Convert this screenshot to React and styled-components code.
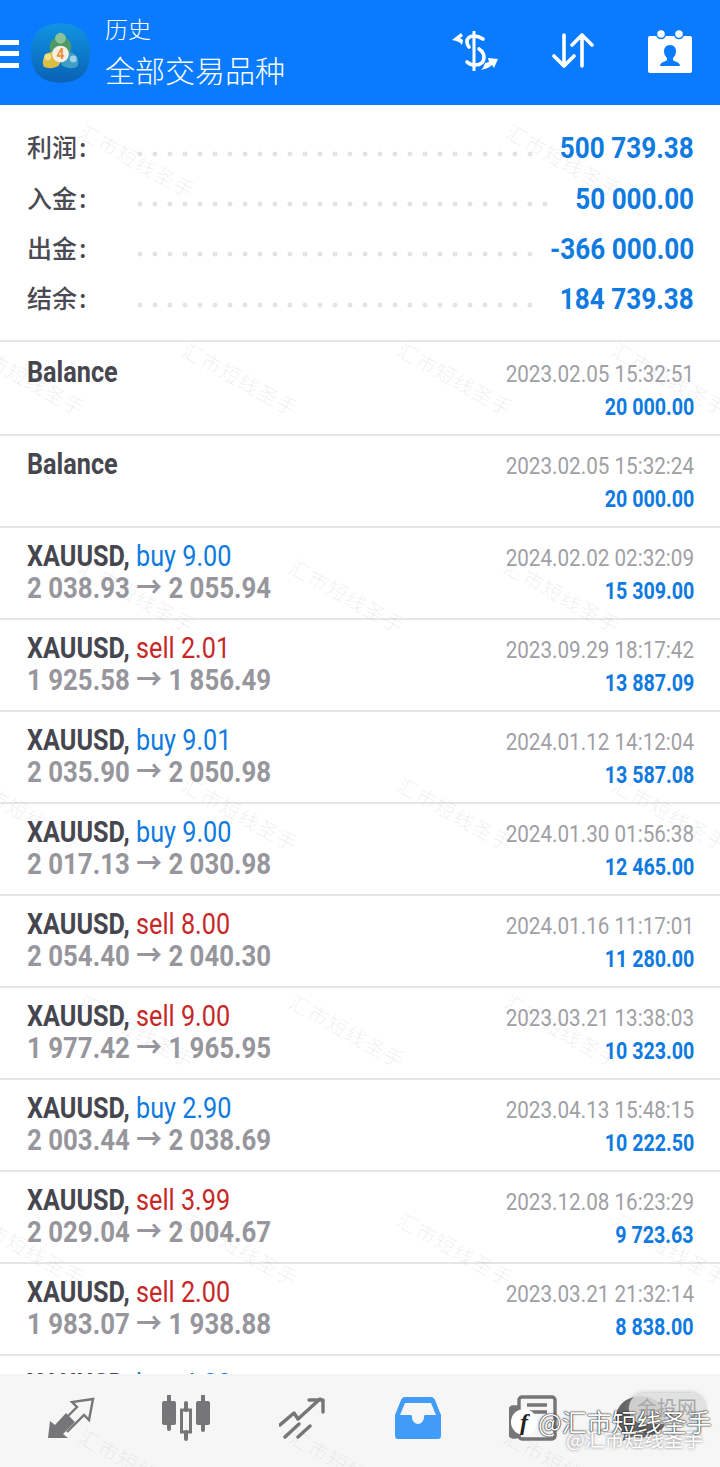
import React from "react";
import styled, { createGlobalStyle } from "styled-components";

const CJK = '"Noto Sans CJK SC", "Noto Sans", sans-serif';

const GlobalStyle = createGlobalStyle`
  html, body { margin: 0; padding: 0; background: #fff; }
  body { font-family: Roboto, ${CJK}; }
`;

const summary = [
  { label: "利润", value: "500 739.38", dots: 27 },
  { label: "入金", value: "50 000.00", dots: 28 },
  { label: "出金", value: "-366 000.00", dots: 27 },
  { label: "结余", value: "184 739.38", dots: 27 },
];

const deals = [
  { symbol: "Balance", time: "2023.02.05 15:32:51", profit: "20 000.00", tall: true },
  { symbol: "Balance", time: "2023.02.05 15:32:24", profit: "20 000.00" },
  { symbol: "XAUUSD,", side: "buy", lots: "9.00", from: "2 038.93", to: "2 055.94", time: "2024.02.02 02:32:09", profit: "15 309.00" },
  { symbol: "XAUUSD,", side: "sell", lots: "2.01", from: "1 925.58", to: "1 856.49", time: "2023.09.29 18:17:42", profit: "13 887.09" },
  { symbol: "XAUUSD,", side: "buy", lots: "9.01", from: "2 035.90", to: "2 050.98", time: "2024.01.12 14:12:04", profit: "13 587.08" },
  { symbol: "XAUUSD,", side: "buy", lots: "9.00", from: "2 017.13", to: "2 030.98", time: "2024.01.30 01:56:38", profit: "12 465.00" },
  { symbol: "XAUUSD,", side: "sell", lots: "8.00", from: "2 054.40", to: "2 040.30", time: "2024.01.16 11:17:01", profit: "11 280.00" },
  { symbol: "XAUUSD,", side: "sell", lots: "9.00", from: "1 977.42", to: "1 965.95", time: "2023.03.21 13:38:03", profit: "10 323.00" },
  { symbol: "XAUUSD,", side: "buy", lots: "2.90", from: "2 003.44", to: "2 038.69", time: "2023.04.13 15:48:15", profit: "10 222.50" },
  { symbol: "XAUUSD,", side: "sell", lots: "3.99", from: "2 029.04", to: "2 004.67", time: "2023.12.08 16:23:29", profit: "9 723.63" },
  { symbol: "XAUUSD,", side: "sell", lots: "2.00", from: "1 983.07", to: "1 938.88", time: "2023.03.21 21:32:14", profit: "8 838.00" },
  { symbol: "XAUUSD,", side: "buy", lots: "4.00" },
];

// watermark tiles: [left, top] of each stamp
const stamps = [
  [81, 118], [508, 118],
  [-29, 336], [184, 336], [399, 336], [614, 336],
  [81, 553], [291, 553], [506, 553],
  [-29, 771], [184, 771], [399, 771], [614, 771],
  [81, 988], [291, 988], [506, 988],
  [-29, 1206], [184, 1206], [399, 1206], [614, 1206],
  [81, 1423], [291, 1423], [506, 1423],
];

const Page = styled.div`
  position: relative;
  width: 720px;
  height: 1467px;
  overflow: hidden;
  display: flex;
  flex-direction: column;
  background: #fff;
`;

const Header = styled.header`
  flex: none;
  height: 105px;
  background: #0a7bff;
  display: flex;
  align-items: center;
  color: #fff;
`;

const Burger = styled.div`
  width: 19px;
  height: 28px;
  margin-top: 2px;
  display: flex;
  flex-direction: column;
  justify-content: space-between;
  span { display: block; height: 5px; background: #fff; }
`;

const Logo = styled.svg`
  width: 59px;
  height: 60px;
  margin-left: 12px;
  margin-top: 1px;
`;

const Titles = styled.div`
  margin-left: 15px;
  flex: 1;
  font-family: ${CJK};
  font-weight: 300;
`;

const Sub = styled.div`
  font-size: 23px;
  line-height: 28px;
  margin-top: -2px;
`;

const Title = styled.div`
  font-size: 30px;
  line-height: 42px;
  margin-top: 6px;
`;

const HeaderIcons = styled.div`
  display: flex;
  align-items: center;
  gap: 54px;
  margin-right: 28px;
  margin-bottom: 4px;
`;

const Summary = styled.section`
  flex: none;
  height: 235px;
  box-sizing: border-box;
  padding-top: 18px;
`;

const SummaryRow = styled.div`
  height: 50.4px;
  display: flex;
  align-items: center;
  padding: 0 26px 0 27px;
`;

const SummaryLabel = styled.span`
  flex: none;
  width: 110px;
  font-family: ${CJK};
  font-size: 25px;
  line-height: 30px;
  margin-top: -4px;
  font-weight: 500;
  color: #4a4a52;
  &::after { content: ":"; margin-left: 2px; }
`;

const Dots = styled.span`
  flex: none;
  width: ${(p) => p.$count * 15}px;
  height: 6px;
  margin-top: 11px;
  margin-right: -30px;
  background-image: radial-gradient(circle at 3px 3px, #e4e4e6 2.2px, transparent 2.8px);
  background-size: 15px 6px;
  background-repeat: repeat-x;
`;

const Condensed = styled.span`
  display: inline-block;
  white-space: pre;
  transform: scaleX(${(p) => p.$x || 0.86});
  transform-origin: ${(p) => (p.$end ? "right" : "left")} center;
`;

const SummaryValue = styled(Condensed)`
  margin-left: auto;
  font-size: 29px;
  font-weight: 700;
  color: #0f7ae0;
`;

const List = styled.div`
  flex: 1;
  overflow: hidden;
`;

const Row = styled.div`
  height: ${(p) => (p.$tall ? 94 : 92)}px;
  box-sizing: border-box;
  border-top: 2px solid #e6e6e8;
  padding: 0 26px 0 27px;
  display: flex;
  justify-content: space-between;
`;

const Left = styled.div`
  padding-top: ${(p) => (p.$tall ? 13 : 11)}px;
`;

const Right = styled.div`
  padding-top: ${(p) => (p.$tall ? 17 : 15)}px;
  display: flex;
  flex-direction: column;
  align-items: flex-end;
`;

const TopLine = styled(Condensed)`
  display: block;
  font-size: 29px;
  line-height: 34px;
  font-weight: 400;
  color: ${(p) => (p.$side === "sell" ? "#c62828" : "#0f7ae0")};
`;

const Symbol = styled.b`
  font-weight: 700;
  color: #46464e;
`;

const Prices = styled(Condensed)`
  display: block;
  font-size: 29px;
  line-height: 30px;
  font-weight: 700;
  color: #96969c;
`;

const Time = styled(Condensed)`
  font-size: 24px;
  line-height: 30px;
  color: #a0a0a6;
`;

const Profit = styled(Condensed)`
  font-size: 24px;
  line-height: 30px;
  margin-top: 3px;
  font-weight: 700;
  color: #0f7ae0;
`;

const Nav = styled.nav`
  position: relative;
  flex: none;
  height: 93px;
  background: #f6f6f6;
  display: grid;
  grid-template-columns: repeat(6, 1fr);
  padding: 0 13px;
  align-items: center;
`;

const NavCell = styled.div`
  display: flex;
  justify-content: center;
  margin-top: -6px;
  margin-right: ${(p) => p.$shift || 0}px;
`;

const Stamp = styled.span`
  position: absolute;
  font-family: ${CJK};
  font-size: 20px;
  font-weight: 300;
  line-height: 24px;
  letter-spacing: 1.5px;
  white-space: nowrap;
  color: rgba(120, 120, 130, 0.13);
  transform: rotate(29deg);
  transform-origin: left center;
  pointer-events: none;
`;

const Badge = styled.div`
  position: absolute;
  left: 629px;
  top: 1393px;
  width: 76px;
  height: 31px;
  border-radius: 15px;
  background: rgba(222, 222, 222, 0.88);
  box-shadow: 0 0 4px rgba(150, 150, 150, 0.7);
  font-family: ${CJK};
  font-size: 20px;
  line-height: 29px;
  text-align: center;
  color: #a8a8a8;
`;

const Credit = styled.div`
  position: absolute;
  font-family: ${CJK};
  white-space: nowrap;
  color: #fff;
`;

const CreditMain = styled(Credit)`
  left: 538px;
  top: 1406px;
  font-size: 25px;
  line-height: 30px;
  text-shadow: 0 0 2px #000, 0 0 1px #000;
`;

const CreditSub = styled(Credit)`
  left: 566px;
  top: 1427px;
  font-size: 19.8px;
  line-height: 24px;
  text-shadow: 0 0 3px rgba(90, 90, 90, 0.8);
`;

const Zhihu = styled.div`
  position: absolute;
  left: 511px;
  top: 1409px;
  width: 26px;
  height: 26px;
  border-radius: 50%;
  background: #fff;
  color: #222;
  font-family: "Liberation Serif", serif;
  font-style: italic;
  font-weight: 700;
  font-size: 24px;
  line-height: 26px;
  text-align: center;
`;

function MtLogo() {
  return (
    <Logo viewBox="0 0 60 60">
      <defs>
        <linearGradient id="tile" x1="0" y1="0" x2="0" y2="1">
          <stop offset="0" stopColor="#0f94e2" />
          <stop offset="1" stopColor="#0a62b4" />
        </linearGradient>
      </defs>
      <path d="M30 0C50 0 60 10 60 30S50 60 30 60 0 50 0 30 10 0 30 0Z" fill="url(#tile)" />
      <circle cx="30" cy="24" r="11" fill="#4c9a68" />
      <circle cx="30" cy="15" r="5.5" fill="#8cc29a" />
      <path d="M13 44c-3-6 1-15 8-15 4 0 8 4 10 9l-3 5c-5 3-11 3-15 1Z" fill="#d9bd44" />
      <circle cx="17" cy="34" r="3.5" fill="#f1e08a" />
      <path d="M47 44c3-6-1-15-8-15-4 0-8 4-10 9l3 5c5 3 11 3 15 1Z" fill="#3f9ec8" />
      <circle cx="43" cy="36" r="3.5" fill="#9fd2e6" />
      <circle cx="30" cy="31" r="8.5" fill="#f6efe4" />
      <text x="30" y="36" textAnchor="middle" fontSize="14" fontWeight="700" fontFamily="Roboto" fill="#e8923c">4</text>
    </Logo>
  );
}

function DollarIcon() {
  return (
    <svg width="46" height="40" viewBox="0 0 46 40" fill="none" stroke="#fff" strokeLinecap="round">
      <path d="M22 1v38" strokeWidth="3" />
      <path d="M31 8c-3-2-6-3-9-3-4 0-7 2-7 6 0 2 1 4 2 5" strokeWidth="3.6" />
      <path d="M27 18c3 2 5 4 5 8 0 5-3 8-9 8-3 0-6-1-8-3" strokeWidth="3.6" />
      <path d="M0 9l9-7 2 3-3 2 3 2-1 5c-2-3-5-4-10-5Z" fill="#fff" stroke="none" />
      <path d="M46 28l-10-1 1 4-4 1c-1 3-2 5-4 7 5-1 9-3 11-5l2 3Z" fill="#fff" stroke="none" />
    </svg>
  );
}

function SwapIcon() {
  return (
    <svg width="42" height="36" viewBox="0 0 42 36" fill="none" stroke="#fff" strokeWidth="3.6" strokeLinecap="round" strokeLinejoin="round">
      <path d="M12 2v31M2 23l10 10 10-10" />
      <path d="M30 33V2M20 12L30 2l10 10" />
    </svg>
  );
}

function ContactIcon() {
  return (
    <svg width="44" height="44" viewBox="0 0 44 44">
      <path fillRule="evenodd" fill="#fff" d="M2 7h40a2 2 0 0 1 2 2v33a2 2 0 0 1-2 2H2a2 2 0 0 1-2-2V9a2 2 0 0 1 2-2ZM22 16c-4 0-6 3-6 6 0 3 1 5 3 7v2c-2 2-7 2-7 6h20c0-4-5-4-7-6v-2c2-2 3-4 3-7 0-3-2-6-6-6Z" />
      <circle cx="13" cy="5" r="4.5" fill="#fff" stroke="#0a7bff" strokeWidth="1.5" />
      <circle cx="31" cy="5" r="4.5" fill="#fff" stroke="#0a7bff" strokeWidth="1.5" />
    </svg>
  );
}

function TradeIcon() {
  return (
    <svg width="48" height="42" viewBox="0 0 48 42" fill="none">
      <path d="M1 41l2-17 5 4 11-12 9 9-12 12 5 4z" fill="#767678" />
      <path d="M20 35l17-17 5 5 4-21-21 3 5 5-17 17" stroke="#767678" strokeWidth="2.4" />
    </svg>
  );
}

function CandlesIcon() {
  return (
    <svg width="48" height="46" viewBox="0 0 48 46" fill="#767678" stroke="#767678" strokeLinecap="round">
      <path d="M7 1v33M41 1v34" strokeWidth="4" />
      <rect x="0" y="6" width="14" height="24" rx="2" stroke="none" />
      <rect x="34" y="6" width="14" height="24" rx="2" stroke="none" />
      <path d="M24 8v7M24 37v7" strokeWidth="4" />
      <rect x="19.5" y="15" width="9" height="22" fill="none" strokeWidth="3" />
    </svg>
  );
}

function TrendIcon() {
  return (
    <svg width="46" height="42" viewBox="0 0 46 42" fill="none" stroke="#767678" strokeWidth="3.4" strokeLinecap="round" strokeLinejoin="round">
      <path d="M1 28l14-12 4 6 22-20" />
      <path d="M30 3h14v12" />
      <path d="M6 40l14-13M19 40l12-11" />
    </svg>
  );
}

function TrayIcon() {
  return (
    <svg width="46" height="42" viewBox="0 0 46 42">
      <path fillRule="evenodd" fill="#419cf8" d="M10 0h26c2 0 3 1 4 3l6 15v21c0 2-1 3-3 3H3c-2 0-3-1-3-3V18L6 3c1-2 2-3 4-3ZM10 6L5 18h10c1 0 2 0 2 2 0 4 3 7 6 7s6-3 6-7c0-2 1-2 2-2h10L36 6Z" />
    </svg>
  );
}

function NewsIcon() {
  return (
    <svg width="48" height="46" viewBox="0 0 48 46" fill="none" stroke="#767678" strokeWidth="3.4">
      <rect x="10" y="2" width="36" height="42" rx="3" />
      <path d="M18 10h20M18 17h20" />
      <rect x="1" y="12" width="9" height="30" rx="3" fill="#767678" />
    </svg>
  );
}

function ChatIcon() {
  return (
    <svg width="56" height="48" viewBox="0 0 48 44">
      <path d="M24 2C10 2 1 11 1 22c0 7 4 12 8 15l-2 6 9-4c3 1 5 1 8 1 14 0 23-8 23-18S38 2 24 2Z" fill="#666668" />
    </svg>
  );
}

export default function App() {
  return (
    <Page>
      <GlobalStyle />
      <Header>
        <Burger><span /><span /><span /></Burger>
        <MtLogo />
        <Titles>
          <Sub>历史</Sub>
          <Title>全部交易品种</Title>
        </Titles>
        <HeaderIcons>
          <DollarIcon />
          <SwapIcon />
          <ContactIcon />
        </HeaderIcons>
      </Header>

      <Summary>
        {summary.map((s) => (
          <SummaryRow key={s.label}>
            <SummaryLabel>{s.label}</SummaryLabel>
            <Dots $count={s.dots} />
            <SummaryValue $end $x={0.9}>{s.value}</SummaryValue>
          </SummaryRow>
        ))}
      </Summary>

      <List>
        {deals.map((d, i) => (
          <Row key={i} $tall={d.tall}>
            <Left $tall={d.tall}>
              <TopLine $side={d.side} $x={0.87}>
                <Symbol>{d.symbol}</Symbol>
                {d.side ? ` ${d.side} ${d.lots}` : ""}
              </TopLine>
              {d.from && <Prices $x={0.89}>{`${d.from} → ${d.to}`}</Prices>}
            </Left>
            <Right $tall={d.tall}>
              {d.time && <Time $end>{d.time}</Time>}
              {d.profit && <Profit $end $x={0.82}>{d.profit}</Profit>}
            </Right>
          </Row>
        ))}
      </List>

      <Nav>
        <NavCell><TradeIcon /></NavCell>
        <NavCell><CandlesIcon /></NavCell>
        <NavCell><TrendIcon /></NavCell>
        <NavCell><TrayIcon /></NavCell>
        <NavCell><NewsIcon /></NavCell>
        <NavCell $shift={16}><ChatIcon /></NavCell>
      </Nav>

      {stamps.map(([x, y]) => (
        <Stamp key={`${x}-${y}`} style={{ left: x, top: y }}>汇市短线圣手</Stamp>
      ))}
      <Badge>金投网</Badge>
      <Zhihu>f</Zhihu>
      <CreditSub>@汇市短线圣手</CreditSub>
      <CreditMain>@汇市短线圣手</CreditMain>
    </Page>
  );
}
